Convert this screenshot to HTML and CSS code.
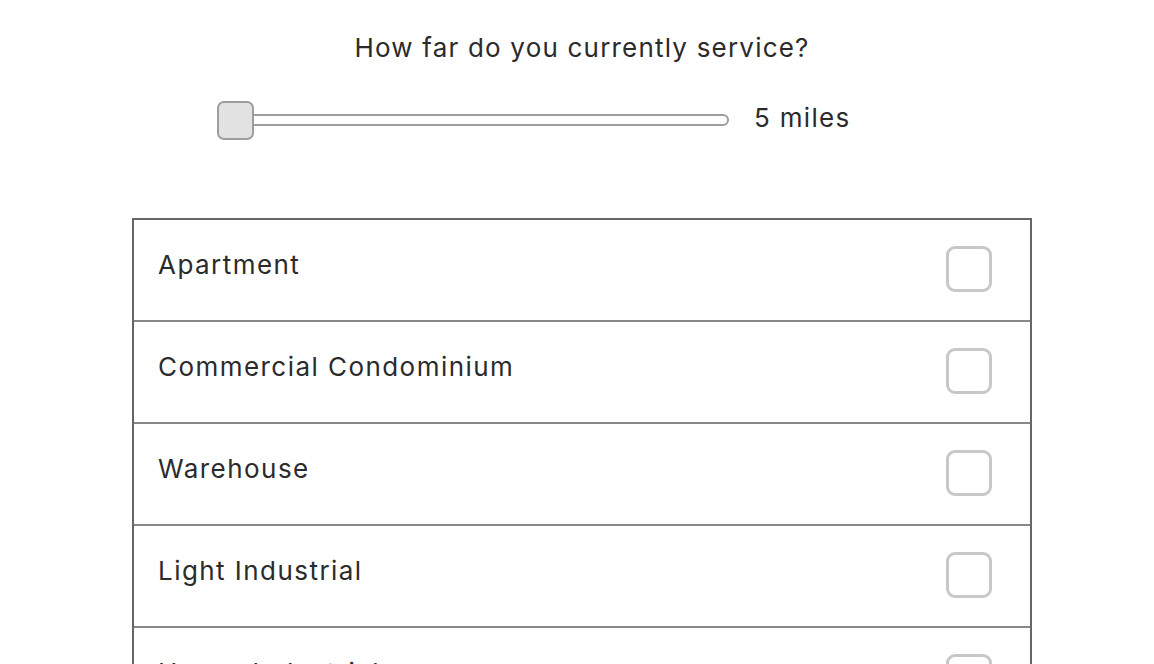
FILE: index.html
```html
<!DOCTYPE html>
<html>
<head>
<meta charset="utf-8">
<link rel="stylesheet" href="styles.css">
</head>
<body>
<div class="page">
  <h1 class="title">How far do you currently service?</h1>
  <div class="slider-row">
    <div class="slider">
      <div class="thumb"></div>
      <div class="track"></div>
    </div>
    <span class="value">5 miles</span>
  </div>
  <div class="list">
    <div class="row"><span class="label">Apartment</span><span class="check"></span></div>
    <div class="row"><span class="label">Commercial Condominium</span><span class="check"></span></div>
    <div class="row"><span class="label">Warehouse</span><span class="check"></span></div>
    <div class="row"><span class="label">Light Industrial</span><span class="check"></span></div>
    <div class="row"><span class="label">Heavy Industrial</span><span class="check"></span></div>
  </div>
</div>
</body>
</html>
```
FILE: styles.css
```css
html, body { margin: 0; padding: 0; background: #fff; overflow: hidden; }
body { font-family: "Inter", "Lato", sans-serif; color: #2b2b2b; }
.page { width: 900px; margin-left: 132px; height: 664px; overflow: hidden; }
.title { margin: 0; padding-top: 32px; font-size: 26px; font-weight: 400; letter-spacing: 1.2px; text-align: center; line-height: 32px; height: 32px; }
.slider-row { display: flex; align-items: center; margin-left: 85px; margin-top: 37px; height: 38px; }
.slider { display: flex; align-items: center; width: 512px; }
.thumb { width: 33px; height: 35px; background: #e2e2e2; border: 2px solid #9e9e9e; border-radius: 7px; flex: none; }
.track { flex: 1; height: 8px; border: 2px solid #9e9e9e; border-left: none; border-radius: 0 6px 6px 0; }
.value { margin-left: 25px; font-size: 26px; letter-spacing: 1.3px; margin-top: -5px; }
.list { margin-top: 79px; border: 2px solid #666; border-bottom: none; }
.row { display: flex; align-items: center; justify-content: space-between; height: 100px; border-bottom: 2px solid #888; padding: 0 38px 0 24px; }
.label { font-size: 26px; letter-spacing: 1.45px; margin-top: -12px; }
.check { width: 40px; height: 40px; border: 3px solid #c8c8c8; border-radius: 9px; margin-top: -3px; }
```
